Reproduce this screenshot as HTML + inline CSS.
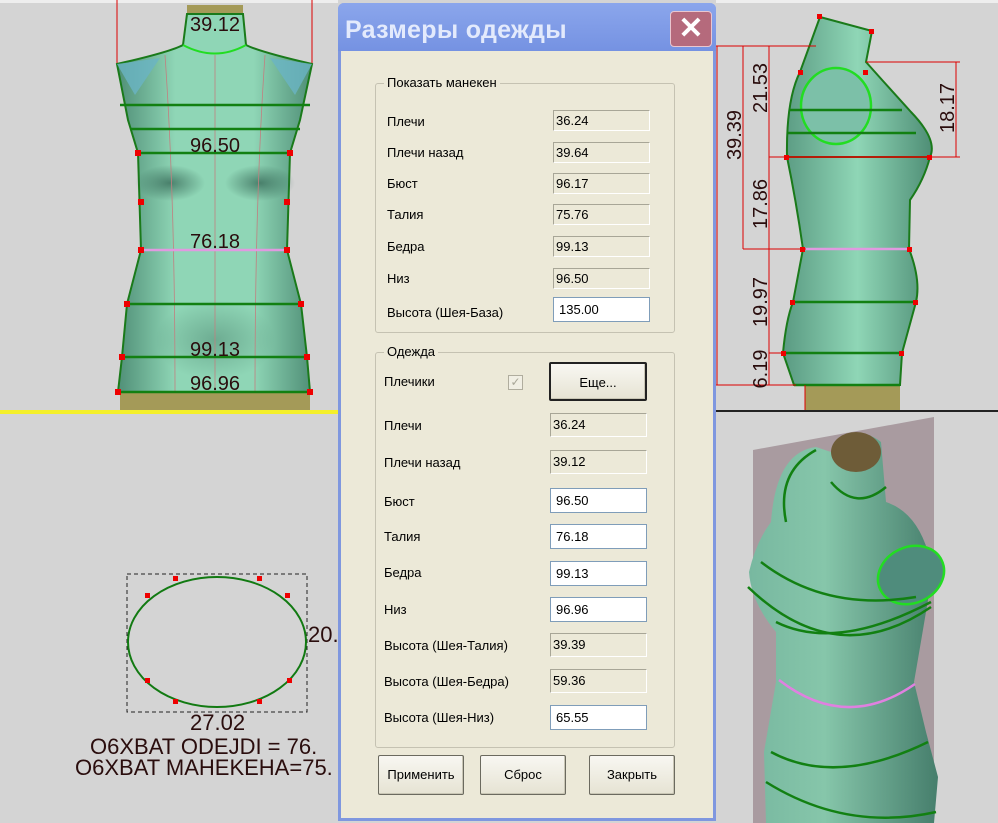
<!DOCTYPE html>
<html><head><meta charset="utf-8"><style>
*{margin:0;padding:0;box-sizing:border-box}
body{width:998px;height:823px;overflow:hidden;background:#d4d4d4;position:relative;font-family:"Liberation Sans",sans-serif}
.abs{position:absolute}
.dlg{position:absolute;left:338px;top:3px;width:378px;height:818px;background:#ece9d8;border:3px solid #7f97df;border-top:none;border-radius:6px 6px 0 0}
.title{position:absolute;left:-3px;top:0;width:378px;height:48px;background:linear-gradient(#8ba6ec,#7592e2);border-radius:6px 6px 0 0;color:#e3eafc;font-size:25px;font-weight:bold;padding:13px 0 0 7px;letter-spacing:0.3px}
.x{position:absolute;left:329px;top:8px;width:42px;height:36px;background:#b56a7c;border:1px solid #e9c6cf;border-radius:4px;color:#fff;font-size:30px;font-weight:bold;text-align:center;line-height:34px}
.grp{position:absolute;border:1px solid #c5c2b2;border-radius:3px}
.gl{position:absolute;top:-9px;left:8px;background:#ece9d8;padding:0 3px;font-size:13px;color:#000}
.lb{position:absolute;font-size:13px;color:#000}
.f{position:absolute;height:21px;border:1px solid #a8a697;border-right-color:#fff;border-bottom-color:#fff;background:#ece9d8;font-size:13px;padding:2px 0 0 2px}
.w{background:#fff;border:1px solid #7f9db9;padding-left:5px}
.btn{position:absolute;height:40px;border:1px solid #6b6a5f;border-radius:2px;background:linear-gradient(#f8f7f2,#e6e3d3);font-size:13px;text-align:center;line-height:38px;box-shadow:inset -1px -1px 0 #c9c6b5}
.mt{font-family:"Liberation Sans",sans-serif;fill:#2a0d0d}
</style></head><body>

<svg class="abs" style="left:0;top:0" width="338" height="420">
<rect x="0" y="0" width="338" height="3" fill="#eee"/>
<line x1="117" y1="0" x2="117" y2="64" stroke="#d00"/><line x1="312" y1="0" x2="312" y2="64" stroke="#d00"/>
<rect x="120" y="390" width="190" height="20" fill="#a49a58"/>
<rect x="187" y="5" width="56" height="12" fill="#a49a58"/>
<defs><linearGradient id="tg" x1="0" x2="1"><stop offset="0" stop-color="#4f8e76"/><stop offset="0.3" stop-color="#8fd6b6"/><stop offset="0.7" stop-color="#8fd6b6"/><stop offset="1" stop-color="#4f8e76"/></linearGradient>
<radialGradient id="sh" cx="0.5" cy="0.5" r="0.5"><stop offset="0" stop-color="#2e5e4e" stop-opacity="0.7"/><stop offset="1" stop-color="#2e5e4e" stop-opacity="0"/></radialGradient></defs>
<path d="M187,14 L243,14 L246,45 Q260,52 312,64 L300,120 L290,153 L287,250 L301,304 L307,357 L310,392 L118,392 L122,357 L127,304 L141,250 L138,153 L128,120 L117,64 Q170,52 183,45 Z" fill="url(#tg)" stroke="#1a7a1a" stroke-width="2"/>
<ellipse cx="170" cy="183" rx="35" ry="18" fill="url(#sh)"/><ellipse cx="260" cy="183" rx="35" ry="18" fill="url(#sh)"/>
<ellipse cx="215" cy="340" rx="60" ry="40" fill="url(#sh)" opacity="0.5"/>
<path d="M117,64 L160,58 L135,95 Z M312,64 L270,58 L295,95 Z" fill="#6ab4c4" opacity="0.8"/>
<g stroke="#c08080" stroke-width="0.8" fill="none"><path d="M215,55 L215,392"/><path d="M165,55 Q175,200 175,392"/><path d="M265,55 Q255,200 255,392"/></g>
<path d="M183,45 Q215,62 246,45" fill="none" stroke="#22dd22" stroke-width="2"/>
<g stroke="#128012" stroke-width="2.5"><line x1="120" y1="105" x2="310" y2="105"/><line x1="130" y1="129" x2="300" y2="129"/><line x1="138" y1="153" x2="290" y2="153"/><line x1="127" y1="304" x2="301" y2="304"/><line x1="122" y1="357" x2="307" y2="357"/><line x1="118" y1="392" x2="310" y2="392"/></g>
<line x1="141" y1="250" x2="287" y2="250" stroke="#e09ae0" stroke-width="2.5"/>
<g fill="#e00"><rect x="135" y="150" width="6" height="6"/><rect x="287" y="150" width="6" height="6"/><rect x="138" y="199" width="6" height="6"/><rect x="284" y="199" width="6" height="6"/><rect x="138" y="247" width="6" height="6"/><rect x="284" y="247" width="6" height="6"/><rect x="124" y="301" width="6" height="6"/><rect x="298" y="301" width="6" height="6"/><rect x="119" y="354" width="6" height="6"/><rect x="304" y="354" width="6" height="6"/><rect x="115" y="389" width="6" height="6"/><rect x="307" y="389" width="6" height="6"/></g>
<g class="mt" font-size="20" text-anchor="middle"><text x="215" y="31">39.12</text><text x="215" y="152">96.50</text><text x="215" y="248">76.18</text><text x="215" y="356">99.13</text><text x="215" y="390">96.96</text></g>
<rect x="0" y="410" width="338" height="4" fill="#f4ef2a"/>
</svg>

<svg class="abs" style="left:0;top:414px" width="338" height="409">
<rect x="127" y="160" width="180" height="138" fill="none" stroke="#222" stroke-dasharray="4,3"/>
<ellipse cx="217" cy="228" rx="89" ry="65" fill="none" stroke="#127a12" stroke-width="2"/>
<g fill="#e00"><rect x="145" y="179" width="5" height="5"/><rect x="285" y="179" width="5" height="5"/><rect x="173" y="162" width="5" height="5"/><rect x="257" y="162" width="5" height="5"/><rect x="145" y="264" width="5" height="5"/><rect x="287" y="264" width="5" height="5"/><rect x="173" y="285" width="5" height="5"/><rect x="257" y="285" width="5" height="5"/></g>
<g class="mt" font-size="22"><text x="308" y="228">20.</text><text x="190" y="316">27.02</text><text x="90" y="340">O6XBAT  ODEJDI = 76.</text><text x="75" y="361">O6XBAT MAHEKEHA=75.</text></g>
</svg>

<svg class="abs" style="left:716px;top:0" width="282" height="412">
<rect x="0" y="0" width="282" height="3" fill="#eee"/>
<rect x="89" y="385" width="95" height="25" fill="#a49a58"/>
<defs><linearGradient id="tg2" x1="0" x2="1"><stop offset="0" stop-color="#5a9a82"/><stop offset="0.5" stop-color="#8fd6b6"/><stop offset="1" stop-color="#4f8e76"/></linearGradient></defs>
<path d="M104,17 L156,31 L150,62 Q175,90 195,112 Q222,140 214,157 Q208,180 194,200 L193,249 Q205,280 200,302 L186,353 L184,385 L78,385 L67,353 Q70,320 77,302 L87,249 Q80,200 71,157 Q70,100 84,72 Z" fill="url(#tg2)" stroke="#1a7a1a" stroke-width="2"/>
<ellipse cx="120" cy="106" rx="35" ry="38" fill="#7cc0a8" stroke="#22dd22" stroke-width="2.5"/>
<g stroke="#128012" stroke-width="2.5"><line x1="73" y1="110" x2="186" y2="110"/><line x1="71" y1="133" x2="200" y2="133"/><line x1="77" y1="302" x2="200" y2="302"/><line x1="67" y1="353" x2="186" y2="353"/><line x1="78" y1="385" x2="184" y2="385"/></g>
<line x1="71" y1="157" x2="214" y2="157" stroke="#8a3a10" stroke-width="2"/>
<line x1="87" y1="249" x2="193" y2="249" stroke="#e09ae0" stroke-width="2.5"/>
<g stroke="#d00" fill="none"><line x1="1" y1="46" x2="1" y2="385"/><line x1="27" y1="46" x2="27" y2="249"/><line x1="53" y1="46" x2="53" y2="385"/><line x1="240" y1="62" x2="240" y2="157"/><line x1="0" y1="46" x2="100" y2="46"/><line x1="150" y1="62" x2="244" y2="62"/><line x1="53" y1="157" x2="244" y2="157"/><line x1="27" y1="249" x2="90" y2="249"/><line x1="53" y1="353" x2="70" y2="353"/><line x1="0" y1="385" x2="80" y2="385"/><line x1="89" y1="385" x2="89" y2="410"/></g>
<g fill="#e00"><rect x="101" y="14" width="5" height="5"/><rect x="153" y="29" width="5" height="5"/><rect x="82" y="70" width="5" height="5"/><rect x="147" y="70" width="5" height="5"/><rect x="68" y="155" width="5" height="5"/><rect x="211" y="155" width="5" height="5"/><rect x="84" y="247" width="5" height="5"/><rect x="191" y="247" width="5" height="5"/><rect x="74" y="300" width="5" height="5"/><rect x="197" y="300" width="5" height="5"/><rect x="65" y="351" width="5" height="5"/><rect x="183" y="351" width="5" height="5"/></g>
<g class="mt" font-size="20" text-anchor="middle">
<text transform="translate(25,135) rotate(-90)">39.39</text>
<text transform="translate(51,88) rotate(-90)">21.53</text>
<text transform="translate(51,204) rotate(-90)">17.86</text>
<text transform="translate(51,302) rotate(-90)">19.97</text>
<text transform="translate(51,369) rotate(-90)">6.19</text>
<text transform="translate(238,108) rotate(-90)">18.17</text></g>
<rect x="0" y="410" width="282" height="2" fill="#222"/>
</svg>

<svg class="abs" style="left:716px;top:412px" width="282" height="411">
<path d="M37,38 L218,5 L218,411 L37,411 Z" fill="#a99ba0"/>
<defs><linearGradient id="g3" x1="0" x2="1"><stop offset="0" stop-color="#78b8a0"/><stop offset="0.4" stop-color="#86c6aa"/><stop offset="1" stop-color="#467e6c"/></linearGradient></defs>
<path d="M115,40 Q140,10 165,30 L170,90 Q200,100 212,140 L215,170 Q205,230 198,270 L210,320 L222,365 L218,411 L50,411 L48,340 L60,270 L60,220 Q35,190 33,160 Q40,130 55,110 Q60,40 100,35 Z" fill="url(#g3)"/>
<ellipse cx="140" cy="40" rx="25" ry="20" fill="#6e5c38"/>
<ellipse cx="195" cy="163" rx="34" ry="28" fill="#4f8c7c" stroke="#22dd22" stroke-width="2.5" transform="rotate(-25 195 163)"/>
<g fill="none" stroke="#128012" stroke-width="2.5">
<path d="M115,70 Q140,100 170,75"/><path d="M45,150 Q110,200 200,185"/><path d="M32,175 Q120,260 215,195"/><path d="M60,210 Q120,240 215,190"/>
<path d="M55,340 Q120,375 212,330"/><path d="M50,370 Q130,420 220,400"/><path d="M70,110 Q60,60 100,38"/></g>
<path d="M63,268 Q130,320 199,272" fill="none" stroke="#e080e0" stroke-width="2.5"/>
</svg>

<div class="dlg">
<div class="title">Размеры одежды</div>
<div class="x">✕</div>
<div class="grp" style="left:34px;top:80px;width:300px;height:250px"><span class="gl">Показать манекен</span></div>
<div class="lb" style="left:46px;top:111px">Плечи</div><div class="f" style="left:212px;top:107px;width:97px">36.24</div>
<div class="lb" style="left:46px;top:142px">Плечи назад</div><div class="f" style="left:212px;top:139px;width:97px">39.64</div>
<div class="lb" style="left:46px;top:173px">Бюст</div><div class="f" style="left:212px;top:170px;width:97px">96.17</div>
<div class="lb" style="left:46px;top:204px">Талия</div><div class="f" style="left:212px;top:201px;width:97px">75.76</div>
<div class="lb" style="left:46px;top:236px">Бедра</div><div class="f" style="left:212px;top:233px;width:97px">99.13</div>
<div class="lb" style="left:46px;top:268px">Низ</div><div class="f" style="left:212px;top:265px;width:97px">96.50</div>
<div class="lb" style="left:46px;top:302px">Высота (Шея-База)</div><div class="f w" style="left:212px;top:294px;width:97px;height:25px;padding-top:4px">135.00</div>

<div class="grp" style="left:34px;top:349px;width:300px;height:396px"><span class="gl">Одежда</span></div>
<div class="lb" style="left:43px;top:371px">Плечики</div>
<div class="abs" style="left:167px;top:372px;width:15px;height:15px;border:1px solid #b0ad9e;background:#f1efe4;color:#a8a697;font-size:12px;text-align:center;line-height:13px">✓</div>
<div class="btn" style="left:208px;top:359px;width:98px;height:39px;border:2px solid #222">Еще...</div>
<div class="lb" style="left:43px;top:415px">Плечи</div><div class="f" style="left:209px;top:410px;width:97px;height:24px;padding-top:3px">36.24</div>
<div class="lb" style="left:43px;top:452px">Плечи назад</div><div class="f" style="left:209px;top:447px;width:97px;height:24px;padding-top:3px">39.12</div>
<div class="lb" style="left:43px;top:491px">Бюст</div><div class="f w" style="left:209px;top:485px;width:97px;height:25px;padding-top:4px">96.50</div>
<div class="lb" style="left:43px;top:526px">Талия</div><div class="f w" style="left:209px;top:521px;width:97px;height:25px;padding-top:4px">76.18</div>
<div class="lb" style="left:43px;top:562px">Бедра</div><div class="f w" style="left:209px;top:558px;width:97px;height:25px;padding-top:4px">99.13</div>
<div class="lb" style="left:43px;top:599px">Низ</div><div class="f w" style="left:209px;top:594px;width:97px;height:25px;padding-top:4px">96.96</div>
<div class="lb" style="left:43px;top:635px">Высота (Шея-Талия)</div><div class="f" style="left:209px;top:630px;width:97px;height:24px;padding-top:3px">39.39</div>
<div class="lb" style="left:43px;top:671px">Высота (Шея-Бедра)</div><div class="f" style="left:209px;top:666px;width:97px;height:24px;padding-top:3px">59.36</div>
<div class="lb" style="left:43px;top:707px">Высота (Шея-Низ)</div><div class="f w" style="left:209px;top:702px;width:97px;height:25px;padding-top:4px">65.55</div>

<div class="btn" style="left:37px;top:752px;width:86px">Применить</div>
<div class="btn" style="left:139px;top:752px;width:86px">Сброс</div>
<div class="btn" style="left:248px;top:752px;width:86px">Закрыть</div>
</div>
</body></html>
